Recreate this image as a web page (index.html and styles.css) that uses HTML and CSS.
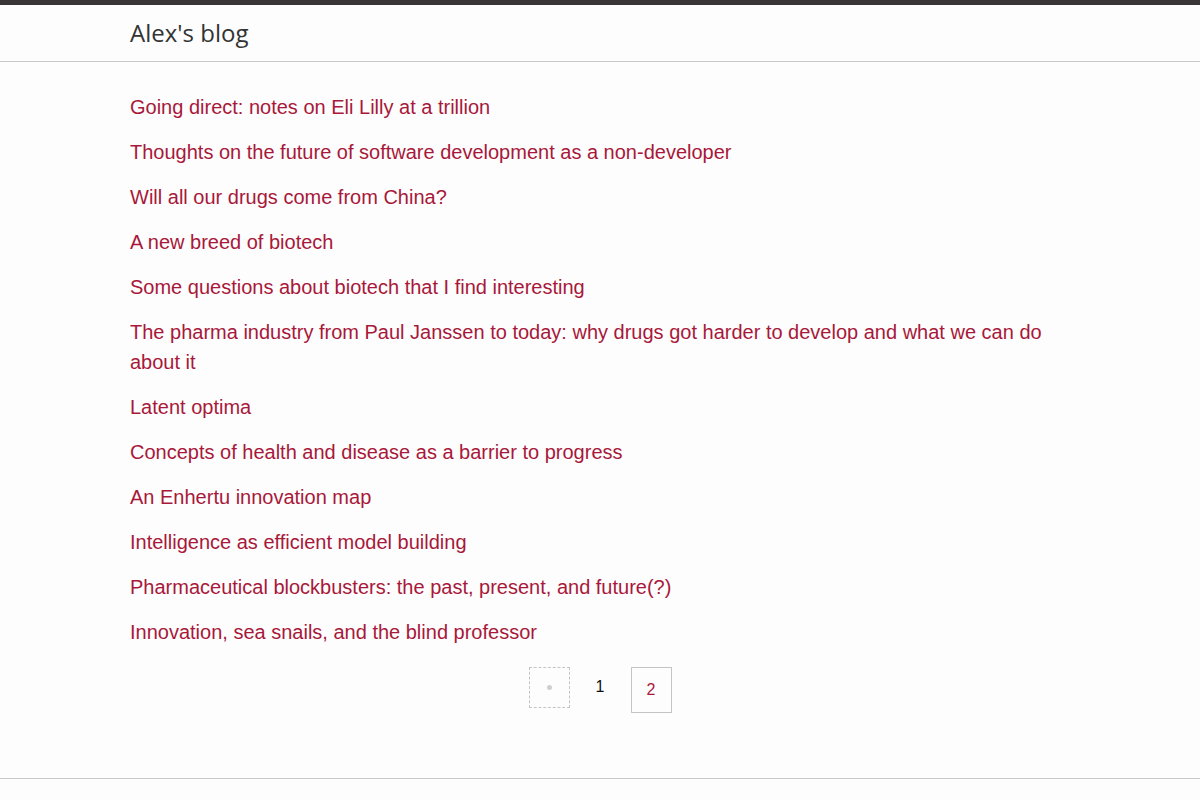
FILE: index.html
```html
<!DOCTYPE html>
<html lang="en">
<head>
<meta charset="utf-8">
<title>Alex's blog</title>
<link rel="stylesheet" href="styles.css">
</head>
<body>
<header class="site-header">
  <div class="wrapper">
    <a class="site-title" href="#">Alex's blog</a>
  </div>
</header>
<main class="page-content">
  <div class="wrapper">
    <ul class="post-list">
      <li><a href="#">Going direct: notes on Eli Lilly at a trillion</a></li>
      <li><a href="#">Thoughts on the future of software development as a non-developer</a></li>
      <li><a href="#">Will all our drugs come from China?</a></li>
      <li><a href="#">A new breed of biotech</a></li>
      <li><a href="#">Some questions about biotech that I find interesting</a></li>
      <li><a href="#">The pharma industry from Paul Janssen to today: why drugs got harder to develop and what we can do about it</a></li>
      <li><a href="#">Latent optima</a></li>
      <li><a href="#">Concepts of health and disease as a barrier to progress</a></li>
      <li><a href="#">An Enhertu innovation map</a></li>
      <li><a href="#">Intelligence as efficient model building</a></li>
      <li><a href="#">Pharmaceutical blockbusters: the past, present, and future(?)</a></li>
      <li><a href="#">Innovation, sea snails, and the blind professor</a></li>
    </ul>
    <nav class="pagination">
      <span class="page prev"><span class="dot"></span></span>
      <span class="page current">1</span>
      <a class="page next" href="#">2</a>
    </nav>
  </div>
</main>
<footer class="site-footer"></footer>
</body>
</html>
```
FILE: styles.css
```css
html, body {
  margin: 0;
  padding: 0;
}
body {
  background: #fdfdfd;
  border-top: 5px solid #3a3536;
  font-family: "Liberation Sans", Arial, sans-serif;
  color: #111;
}
.wrapper {
  max-width: 940px;
  margin: 0 auto;
}
.site-header {
  height: 56px;
  border-bottom: 1px solid #c8c8c8;
}
.site-header .wrapper {
  height: 56px;
  display: flex;
  align-items: center;
}
.site-title {
  font-family: "Open Sans", "Noto Sans", sans-serif;
  font-size: 24px;
  color: #333;
  text-decoration: none;
  line-height: 1;
}
.page-content {
  padding-top: 30px;
  height: 717px;
  box-sizing: border-box;
  border-bottom: 1px solid #c8c8c8;
}
.post-list {
  list-style: none;
  margin: 0;
  padding: 0;
}
.post-list li {
  font-size: 20px;
  line-height: 30px;
  margin-bottom: 15px;
}
.post-list li:last-child {
  margin-bottom: 0;
}
.post-list a {
  color: #a8183a;
  text-decoration: none;
}
.pagination {
  margin-top: 20px;
  display: flex;
  justify-content: center;
  align-items: flex-start;
  gap: 10px;
}
.page {
  width: 41px;
  height: 41px;
  box-sizing: border-box;
  display: flex;
  align-items: center;
  justify-content: center;
  font-size: 16px;
  text-decoration: none;
}
.prev {
  border: 1px dashed #c4c4c4;
}
.dot {
  width: 5px;
  height: 5px;
  border-radius: 50%;
  background: #cfcfcf;
}
.current {
  color: #111;
  height: 39px;
}
.next {
  border: 1px solid #c4c4c4;
  height: 46px;
  color: #a8183a;
}
.site-footer {
  height: 21px;
}
```
